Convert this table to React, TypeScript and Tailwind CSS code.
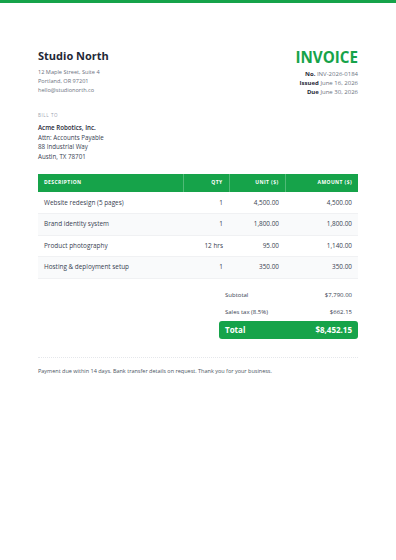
import React from 'react';

const items = [
  { desc: 'Website redesign (5 pages)', qty: '1', unit: '4,500.00', amount: '4,500.00' },
  { desc: 'Brand identity system', qty: '1', unit: '1,800.00', amount: '1,800.00' },
  { desc: 'Product photography', qty: '12 hrs', unit: '95.00', amount: '1,140.00' },
  { desc: 'Hosting & deployment setup', qty: '1', unit: '350.00', amount: '350.00' },
];

export default function App() {
  return (
    <div
      className="w-[396px] h-[560px] bg-white text-[#1f2937]"
      style={{ fontFamily: '"Open Sans", "Noto Sans", sans-serif' }}
    >
      <div className="h-[3px] bg-[#16a34a]" />

      <div className="px-[38px] pt-[45px]">
        {/* header */}
        <div className="flex justify-between">
          <div>
            <h1 className="text-[11px] font-bold leading-[15px] text-[#1f2937]">Studio North</h1>
            <div className="mt-[5px] text-[5.6px] leading-[9px] text-[#6b7280]">
              <p>12 Maple Street, Suite 4</p>
              <p>Portland, OR 97201</p>
              <p>hello@studionorth.co</p>
            </div>
          </div>
          <div className="text-right">
            <h2 className="text-[15.2px] font-bold leading-[19px] text-[#16a34a]">INVOICE</h2>
            <div className="mt-[3px] text-[6px] leading-[9px] text-[#6b7280]">
              <p>
                <span className="font-bold text-[#1f2937]">No.</span> INV-2026-0184
              </p>
              <p>
                <span className="font-bold text-[#1f2937]">Issued</span> June 16, 2026
              </p>
              <p>
                <span className="font-bold text-[#1f2937]">Due</span> June 30, 2026
              </p>
            </div>
          </div>
        </div>

        {/* bill to */}
        <div className="mt-[14px]">
          <p className="text-[4.5px] tracking-[0.6px] leading-[8px] text-[#9ca3af]">BILL TO</p>
          <div className="mt-[4px] text-[6.2px] leading-[9.5px] text-[#374151]">
            <p className="font-semibold text-[#1f2937]">Acme Robotics, Inc.</p>
            <p>Attn: Accounts Payable</p>
            <p>88 Industrial Way</p>
            <p>Austin, TX 78701</p>
          </div>
        </div>

        {/* items */}
        <table className="mt-[13px] w-full border-collapse text-[6.4px]">
          <thead>
            <tr className="bg-[#16a34a] text-white text-[5px] font-bold tracking-[0.4px] h-[18px]">
              <th className="text-left pl-[6px] font-bold border-r border-white/25 w-[145px]">DESCRIPTION</th>
              <th className="text-right pr-[6px] font-bold border-r border-white/25 w-[46px]">QTY</th>
              <th className="text-right pr-[6px] font-bold border-r border-white/25 w-[56px]">UNIT ($)</th>
              <th className="text-right pr-[6px] font-bold">AMOUNT ($)</th>
            </tr>
          </thead>
          <tbody className="text-[#374151]">
            {items.map((it, i) => (
              <tr
                key={it.desc}
                className={`h-[21.5px] border-b border-[#f0f1f3] ${i % 2 === 1 ? 'bg-[#f9fafb]' : 'bg-white'}`}
              >
                <td className="pl-[6px]">{it.desc}</td>
                <td className="text-right pr-[6px]">{it.qty}</td>
                <td className="text-right pr-[6px]">{it.unit}</td>
                <td className="text-right pr-[6px]">{it.amount}</td>
              </tr>
            ))}
          </tbody>
        </table>

        {/* totals */}
        <div className="mt-[8.5px] flex justify-end">
          <div className="w-[139px] text-[6px] text-[#374151]">
            <div className="flex justify-between px-[6px] h-[17px] items-center">
              <span>Subtotal</span>
              <span>$7,790.00</span>
            </div>
            <div className="flex justify-between px-[6px] h-[17px] items-center">
              <span>Sales tax (8.5%)</span>
              <span>$662.15</span>
            </div>
            <div className="flex justify-between items-center px-[6px] h-[18px] rounded-[3px] bg-[#16a34a] text-white text-[8px] font-bold">
              <span>Total</span>
              <span>$8,452.15</span>
            </div>
          </div>
        </div>

        {/* footer */}
        <div className="mt-[18px] border-t border-dotted border-[#e5e7eb] pt-[9px]">
          <p className="text-[5.5px] leading-[8px] text-[#4b5563]">
            Payment due within 14 days. Bank transfer details on request. Thank you for your business.
          </p>
        </div>
      </div>
    </div>
  );
}
